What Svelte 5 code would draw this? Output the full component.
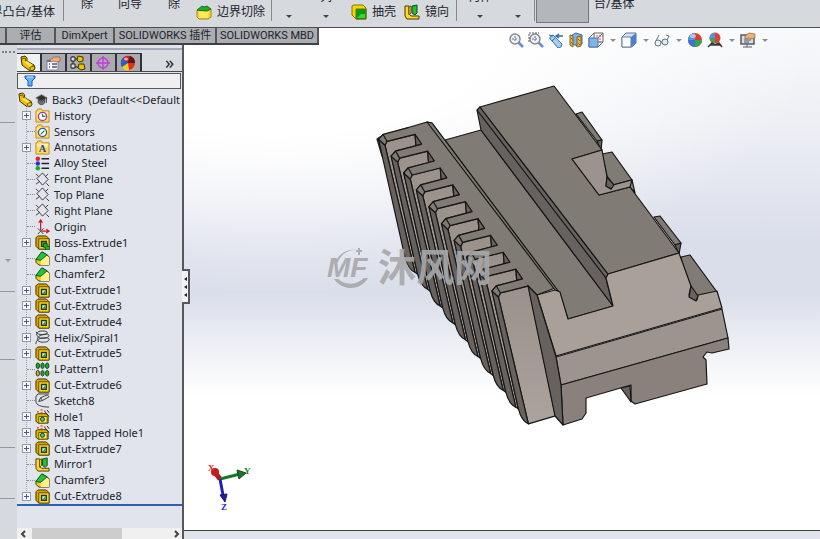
<script>
    let filter = $state("");
    let activeTab = $state(0);
    let selected = $state("");

    const tabs = ["评估", "DimXpert", "SOLIDWORKS 插件", "SOLIDWORKS MBD"];
    const panels = ["part", "props", "config", "target", "ball"];
    const panelNames = ["FeatureManager", "PropertyManager", "ConfigurationManager", "DimXpertManager", "DisplayManager"];

    const tree = [
        { name: "History", icon: "history", open: true },
        { name: "Sensors", icon: "sensor" },
        { name: "Annotations", icon: "notes", open: true },
        { name: "Alloy Steel", icon: "material" },
        { name: "Front Plane", icon: "plane" },
        { name: "Top Plane", icon: "plane" },
        { name: "Right Plane", icon: "plane" },
        { name: "Origin", icon: "origin" },
        { name: "Boss-Extrude1", icon: "boss", open: true },
        { name: "Chamfer1", icon: "chamfer" },
        { name: "Chamfer2", icon: "chamfer" },
        { name: "Cut-Extrude1", icon: "cut", open: true },
        { name: "Cut-Extrude3", icon: "cut", open: true },
        { name: "Cut-Extrude4", icon: "cut", open: true },
        { name: "Helix/Spiral1", icon: "helix", open: true },
        { name: "Cut-Extrude5", icon: "cut", open: true },
        { name: "LPattern1", icon: "pattern" },
        { name: "Cut-Extrude6", icon: "cut", open: true },
        { name: "Sketch8", icon: "sketch" },
        { name: "Hole1", icon: "hole", open: true },
        { name: "M8 Tapped Hole1", icon: "hole", open: true },
        { name: "Cut-Extrude7", icon: "cut", open: true },
        { name: "Mirror1", icon: "mirror" },
        { name: "Chamfer3", icon: "chamfer" },
        { name: "Cut-Extrude8", icon: "cut", open: true }
    ];

    const views = [
        { icon: "zoomfit", label: "Zoom to Fit" },
        { icon: "zoomarea", label: "Zoom to Area" },
        { icon: "previous", label: "Previous View" },
        { icon: "section", label: "Section View" },
        { icon: "orient", label: "View Orientation", menu: true },
        { icon: "display", label: "Display Style", menu: true },
        { icon: "glasses", label: "Hide/Show Items", menu: true },
        { icon: "ball", label: "Edit Appearance" },
        { icon: "scene", label: "Apply Scene", menu: true },
        { icon: "monitor", label: "View Settings", menu: true }
    ];

    // the ten ribs step down the rail by the same amount
    const ribs = Array.from({ length: 10 }, (_, i) => ({ x: 415 + i * 12.6, y: 134.3 + i * 16.85, last: i === 9 }));
</script>

{#snippet icon(kind)}
    <svg class="icon" viewBox="0 0 16 16" aria-hidden="true">
        {#if kind === "part"}
            <path d="M1 2l4-1 2 2v3l7 4 1 3-1 2-4 1-8-6z" fill="#f2c200" stroke="#3a2c00" />
            <path d="M2 4l3-1 1 4 7 4M10 15v-3l4-1" fill="none" stroke="#6b5000" />
            <path d="M7 6l6 4-3 2-6-5z" fill="#ffe04a" />
        {:else if kind === "props"}
            <path d="M2 5h11v10H2z" fill="#f5f7fc" stroke="#7d8498" />
            <path d="M2 5h4v2H2z" fill="#5876bc" />
            <path d="M4 9h1M4 12h1M7 9h5M7 12h5" stroke="#557" stroke-width="1.5" />
            <path d="M5 5l4-3 6 0v4l-4 1-2-1-3 1z" fill="#edb27c" stroke="#915b30" stroke-width=".7" />
        {:else if kind === "config"}
            <path d="M3 1v13M3 4h5M3 12h6" fill="none" stroke="#222" />
            <path d="M1 2h4v4H1zM1 9h4v4H1z" fill="#ddd" stroke="#222" />
            <path d="M8 1l5 1v4l-4 1-2-2zM9 9l5 0 1 5-4 1-3-2z" fill="#eac400" stroke="#403400" />
        {:else if kind === "target"}
            <circle cx="8" cy="8" r="5" fill="none" stroke="#c43ddb" stroke-width="1.4" />
            <path d="M8 1v14M1 8h14" stroke="#c43ddb" stroke-width="1.4" />
        {:else if kind === "globe"}
            <circle cx="8" cy="8" r="7" fill="#2a2a2a" />
            <path d="M8 8L3 3a7 7 0 0 1 7-2z" fill="#d92424" />
            <path d="M8 8l2-7a7 7 0 0 1 5 7z" fill="#5b1620" />
            <path d="M8 8L3 3a7 7 0 0 0-1 9z" fill="#2860c8" />
            <path d="M8 8l-6 4a7 7 0 0 0 13-4z" fill="#f3cf20" />
            <path d="M8 8l1 7a7 7 0 0 0 6-7z" fill="#e02c22" />
            <ellipse cx="6" cy="4" rx="2" ry="1.500" fill="#fff" opacity=".6" />
        {:else if kind === "ball"}
            <circle cx="8" cy="8" r="7" fill="#e33b2d" />
            <path d="M8 8V1A7 7 0 0 0 1 8z" fill="#3aa845" />
            <path d="M1 8a7 7 0 0 0 7 7V8z" fill="#3975d6" />
            <path d="M8 15a7 7 0 0 0 7-7H8z" fill="#35a84c" />
            <path d="M1 8a7 7 0 0 1 7-7v7z" fill="#5d8fe0" />
            <ellipse cx="6" cy="4" rx="3" ry="2" fill="#fff" opacity=".5" />
        {:else if kind === "hat"}
            <path d="M1 6l7-4 7 4-7 4z" fill="#333" stroke="#777" />
            <path d="M4 8v4c2 3 6 3 8 0V8l-4 3z" fill="#777" stroke="#333" />
            <path d="M14 6v6" stroke="#222" />
        {:else if kind === "history" || kind === "sensor" || kind === "notes"}
            <path d="M1 3h1l1-2h4l1 2h7v12H1z" fill="#ffd95e" stroke="#c08a16" />
            <path d="M2 4h12v3H2z" fill="#ffedaa" />
            {#if kind === "notes"}
                <text x="8" y="13" class="letter">A</text>
            {:else}
                <circle cx="8" cy="9" r="4.3" fill="#fff" stroke={kind === "history" ? "#9b3dab" : "#355d97"} stroke-width="1.4" />
                <path d={kind === "history" ? "M8 6v3h3" : "M6 11l4-4M8 9h1"} fill="none" stroke="#25805a" stroke-width="1.3" />
            {/if}
        {:else if kind === "material"}
            <circle cx="3" cy="3" r="2.4" fill="#e12323" />
            <circle cx="3" cy="8" r="2.4" fill="#2434d8" />
            <circle cx="3" cy="13" r="2.4" fill="#20a72b" />
            <path d="M7 3h8M7 8h8M7 13h8" stroke="#222" stroke-width="1.5" />
        {:else if kind === "plane"}
            <path d="M8 1l6 7-6 6-6-7zM1 2l3 3M12 12l3 3M1 13l4-3M11 5l3-3" fill="none" stroke="#353535" />
        {:else if kind === "origin"}
            <path d="M3 10l6 6M9 10l-6 6" stroke="#343434" />
            <path d="M6 12V2M4 4l2-3 2 3M7 13h7M12 11l3 2-3 2" fill="none" stroke="#ca1924" stroke-width="1.3" />
        {:else if kind === "boss" || kind === "cut"}
            <path d="M1 3l2-2h9l3 3v11H4l-3-3z" fill="#dca500" stroke="#3c2e00" />
            <path d="M4 4h11v11H4z" fill="#ffd21f" stroke="#604800" />
            <path d="M7 7h5v5H7z" fill={kind === "cut" ? "#e3ffe4" : "#58c75c"} stroke="#153b20" stroke-width="1.5" />
            {#if kind === "boss"}
                <path d="M9 9h4v3h3v4h-5v-3H9z" fill="#24ae37" stroke="#0a4f18" />
            {:else}
                <path d="M8 11l3-3v3z" fill="#079e31" />
            {/if}
        {:else if kind === "chamfer"}
            <path d="M1 9l7-8 7 5v9H4l-3-3z" fill="#f4c81a" stroke="#3d3000" />
            <path d="M6 9l6-5 3 3v8H6z" fill="#fff08b" />
            <path d="M1 9l6-8 6 3-7 6z" fill="#28c041" stroke="#0a5b20" />
        {:else if kind === "helix"}
            <path d="M1 2c2 2 3 3 7 3 7 0 7-4 0-4S1 5 3 7c2 3 12 2 12-1 0-2-4-2-7-1-5 1-7 5-4 7 4 2 11 1 11-2 0-2-5-2-9-1s-5 4-5 6" fill="none" stroke="#333" />
        {:else if kind === "pattern"}
            {#each [3, 8, 13] as x}
                <ellipse cx={x} cy="4" rx="1.8" ry="3" fill="#1ca637" stroke="#153c1c" />
                <ellipse cx={x} cy="12" rx="1.8" ry="3" fill={x === 3 ? "#ef9a22" : "#1ca637"} stroke="#263b1c" />
            {/each}
        {:else if kind === "sketch"}
            <path d="M15 1H3L1 4v5c0 4 6 6 14 6M4 9l2-4 7-3 2 2-7 4zM6 5l2 3" fill="none" stroke="#333" />
        {:else if kind === "hole"}
            <path d="M1 6l2-1h9l2 2v8H3l-2-2z" fill="#ddb400" stroke="#3f3200" />
            <path d="M4 8h9v7H4z" fill="#ffe75b" stroke="#655000" />
            <circle cx="8" cy="11" r="2.2" fill="#52bd68" stroke="#193f24" />
            <path d="M2 3h2M6 1h2M6 4h2M10 2h1" stroke="#ed5822" stroke-width="1.5" />
            <path d="M10 2l5 6M13 1l2 3" stroke="#222" />
        {:else if kind === "mirror"}
            <path d="M1 2h4v8l2 2h8v3H3l-2-3z" fill="#ffd72c" stroke="#4b3900" />
            <path d="M8 2l5-1v8l-2 2-3-2z" fill="#2abb35" stroke="#064e14" />
            <path d="M5 3l2-1v7l-2 2z" fill="#ffe050" stroke="#654c00" />
        {:else if kind === "boundary"}
            <path d="M1 6h11l3-1v8l-3 2H3l-2-2z" fill="#ffd62e" stroke="#a98412" />
            <path d="M1 6l5-4 2 1 3-1 4 3-4 2z" fill="#20a935" stroke="#0b7a1e" />
            <path d="M3 8h9v6H3z" fill="#ffe75e" />
        {:else if kind === "shell"}
            <path d="M1 2l2-1h9l3 3v11H5l-4-4z" fill="#f1d800" stroke="#8a7200" />
            <path d="M5 5h10v10H5z" fill="#0c9a1c" stroke="#6b6b00" />
            <path d="M6 14l4-4h4v4z" fill="#23df38" />
        {:else if kind === "zoomfit" || kind === "zoomarea"}
            <path d="M10 10l5 5" stroke="#6a8fd0" stroke-width="2.6" />
            <circle cx="7" cy="7" r="5" fill="#edf2f8" stroke="#858a94" stroke-width="1.5" />
            <path d="M4 7h6M7 4v6" stroke="#62738e" stroke-dasharray="2 1" />
            {#if kind === "zoomarea"}
                <path d="M1 10V1h10" fill="none" stroke="#565b66" stroke-dasharray="2 1" />
            {/if}
        {:else if kind === "previous"}
            <path d="M2 5l3-2 9 9-1 3-3 1-5-6-3-3z" fill="#a4cdf2" stroke="#4177a6" />
            <path d="M4 9l3-3M1 3l4 1" stroke="#3467ae" />
            <path d="M15 4H9M11 2L8 4l3 2" fill="none" stroke="#3467ae" stroke-width="1.4" />
        {:else if kind === "section"}
            <path d="M4 3l4-2 6 2v9l-4 2-6-2z" fill="#80afe8" stroke="#416da6" />
            <path d="M2 3l3 1v11l-3-2zM9 5l4-1v10l-4 1z" fill="#e9bd3d" stroke="#796026" />
            <path d="M3 6l2 2M3 10l2 2M10 7l2 2M10 11l2 2" stroke="#8a6826" />
        {:else if kind === "orient"}
            <path d="M1 6l5-5h9v9l-5 5H1z" fill="#fafafa" stroke="#666" />
            <path d="M1 6h9v9H1z" fill="#7fb3e9" stroke="#4678b0" />
            <path d="M6 1v5M10 6l5-5M10 10h5" stroke="#666" />
            <path d="M12 3v8M8 4h7" stroke="#d85454" stroke-dasharray="2 1" />
        {:else if kind === "display"}
            <path d="M1 5l4-4h10v10l-4 4H1z" fill="#d5e3f6" stroke="#62769e" />
            <path d="M10 5l5-4v10l-5 4z" fill="#477fd1" />
            <path d="M1 5h9v10H1z" fill="#fafcff" stroke="#6c7d9b" />
        {:else if kind === "glasses"}
            <circle cx="4" cy="11" r="3" fill="#edf2f7" stroke="#68717d" />
            <circle cx="11" cy="10" r="3" fill="#dcecf5" stroke="#68717d" />
            <path d="M7 10h1M2 9l3-6M13 8l2-4-3-1" fill="none" stroke="#68717d" />
        {:else if kind === "scene"}
            <circle cx="8" cy="6" r="5.5" fill="#e14036" />
            <path d="M8 6V.5A5.5 5.5 0 0 0 2.500 6z" fill="#5d8fe0" />
            <path d="M2.500 6A5.5 5.5 0 0 0 8 11.500V6z" fill="#40a558" />
            <path d="M1 15l4-4 3 2 4-2 3 4M3 13h10" fill="none" stroke="#383838" stroke-width="1.5" />
        {:else if kind === "monitor"}
            <path d="M1 3h13v9H1z" fill="#d9dde6" stroke="#555963" stroke-width="1.5" />
            <path d="M7 12v3M3 15h9M4 8h7M4 10h5" stroke="#555963" />
            <path d="M5 4l4-3 6 1v4l-4 1-2-1-4 1z" fill="#edb27c" stroke="#915b30" stroke-width=".7" />
        {/if}
    </svg>
{/snippet}

<div class="app">
    <header class="ribbon">
        <div class="group first"><button class="row">边界凸台/基体</button></div>
        <div class="group holes">
            <button class="high">除</button>
            <button class="high">向导</button>
            <button class="high">除</button>
            <button class="row">{@render icon("boundary")}边界切除</button>
        </div>
        <div class="group patterns">
            <button class="drop" aria-label="Fillet menu"><i></i></button>
            <button class="drop wide"><span>列</span><i></i></button>
            <button class="row">{@render icon("shell")}抽壳</button>
            <button class="row">{@render icon("mirror")}镜向</button>
        </div>
        <div class="group geometry">
            <button class="drop"><span>何体</span><i></i></button>
            <button class="drop" aria-label="Curves menu"><i></i></button>
        </div>
        <button class="pressed" aria-label="Instant3D"></button>
        <button class="high last">台/基体</button>
    </header>

    <div class="work">
        <nav class="tabs">
            <span class="stub"></span>
            {#each tabs as tab}
                <button>{tab}</button>
            {/each}
        </nav>

        <aside class="strip">
            <div class="grip"></div>
            <div class="slot one"></div>
            <div class="slot two"><i></i></div>
            <div class="slot three"></div>
            <div class="slot four"></div>
            <div class="slot five"></div>
        </aside>

        <section class="side">
            <div class="paneltabs">
                {#each panels as panel, index}
                    <button class:active={activeTab === index} aria-label={panelNames[index]} onclick={() => activeTab = index}>
                        {@render icon(panel === "ball" ? "globe" : panel)}
                    </button>
                {/each}
                <button class="more">»</button>
            </div>
            <label class="filter">
                <svg viewBox="0 0 12 12" aria-hidden="true">
                    <path d="M1 1h10v2L8 6v5H4V6L1 3z" fill="#62b3f4" stroke="#1959bd" />
                    <path d="M3 2h6" stroke="#d7f0ff" />
                </svg>
                <input type="text" aria-label="Filter" bind:value={filter} />
            </label>
            <ul class="tree">
                <li class="root">{@render icon("part")}{@render icon("hat")}<span>Back3&nbsp; (Default&lt;&lt;Default</span></li>
                {#each tree as item}
                    <li class:selected={selected === item.name}>
                        {#if item.open}
                            <button class="plus" aria-label="Expand {item.name}"></button>
                        {:else}
                            <span class="dots"></span>
                        {/if}
                        {@render icon(item.icon)}
                        <button class="name" onclick={() => selected = item.name}>{item.name}</button>
                    </li>
                {/each}
            </ul>
            <div class="rollback"></div>
            <div class="scroll">
                <svg viewBox="0 0 6 8" aria-hidden="true"><path d="M5 1L2 4l3 3" /></svg>
                <div class="track"><div class="thumb"></div></div>
                <svg viewBox="0 0 6 8" aria-hidden="true"><path d="M1 1l3 3-3 3" /></svg>
            </div>
            <button class="handle" aria-label="Collapse panel"><i></i><i></i><i></i></button>
        </section>

        <main class="view">
            <div class="viewbar">
                {#each views as view}
                    <button aria-label={view.label}>{@render icon(view.icon)}</button>
                    {#if view.menu}
                        <button class="arrow" aria-label="{view.label} menu"><i></i></button>
                    {/if}
                {/each}
            </div>
            <svg class="canvas" viewBox="184 28 636 502" role="img" aria-label="Back3">
                <defs>
                    <linearGradient id="front" x1="0" y1="0" x2="0" y2="1">
                        <stop offset="0" stop-color="#9a918b" />
                        <stop offset="1" stop-color="#aca39d" />
                    </linearGradient>
                </defs>
                <g class="model">
                    <!-- teeth on the far side -->
                    <path class="top" d="M576 114l6-2 20 28-5 1z" />
                    <path class="dark" d="M597 141l5-1-1 11z" />
                    <path class="top" d="M602 154l10-2 20 28-19 5-6-9z" />
                    <path class="face" d="M613 185l19-5 3 13-5-6-19 3z" />
                    <path class="top" d="M654 217l6-1 21 27-6 2z" />
                    <path class="dark" d="M675 245l6-2-2 11z" />
                    <path class="top" d="M681 257l9-2 27 37-19 5-10-5z" />

                    <!-- channel, rail and main block -->
                    <path class="top" d="M445 140l36-10 132 176-45 13-9-26z" />
                    <path class="top" d="M377 139l6-4 44-13 5 1 123 165-18 7-9-9-146-130z" />
                    <path class="top" d="M427 122l5 1 127 169-4-2z" />
                    <path class="dark" d="M477 110l3-3 128 167-2 4 7 28-132-176z" />
                    <path class="line" d="M477 110l129 168" />
                    <path class="top" d="M480 107l74-21 48 64-30 9 27 36 31-8 49 66-71 21z" />
                    <path class="face" d="M572 159l30-9 5 27-1 9 5 3 2-4 19-5-2 7-31 8z" />
                    <path class="dark" d="M607 177l7 8-3 4-5-3z" />

                    <!-- front -->
                    <path class="light" d="M537 295l18-5 5 2 8 27 45-13-7-28 2-4 71-21 12 33-2 9 8 5 1-5 19-4 5 17-166 48z" />
                    <path class="dark" d="M691 286l7 10-2 5-7-4z" />
                    <path class="mid" d="M556 357l166-48 6 29-167 47z" />
                    <path class="low" d="M561 385l167-47 1 11-17 4-5-1-4 5 3 3 1 24-72 20-4-3v-16l-45 13v15l-4 6-19 6z" />
                    <path class="dark" d="M621 388l9-2 1 16z" />

                    {#each ribs as rib}
                        <g transform="translate({rib.x} {rib.y})">
                            {#if rib.last}
                                <path class="ribface" d="M0 0l-28 7-2 4L0 138l27-8z" />
                            {:else}
                                <path class="ribface" d="M0 0l1 11.500-20.700 5.300-4 5L2.600 140 0 138-30 11l2-4z" />
                                <path class="dark" d="M0 0l6.700 9.800L1 11.500z" />
                            {/if}
                            <path class="dark" d="M-36.500 5L-30 11 0 138q-7-3-10-15z" />
                            <path class="top" d="M-5.700-7L-32 0l-4.500 5 6.500 6 2-4L0 0" />
                            <path class="line" d="M-32 0l4 7" />
                        </g>
                    {/each}
                    <path class="dark" d="M528 286l9 9 19 62 5 28 2 40-8-9z" />
                </g>

                <g class="mark">
                    <path d="M361 251a20 20 0 0 0-26 12l3-1a18 18 0 0 1 23-11zM334 279a20 20 0 0 0 34-1h-4a19 19 0 0 1-26 1zM358 250v-2h2v2h2v2h-2v3h-2v-3h-2v-2z" />
                    <text class="mf" x="327" y="277">MF</text>
                    <text class="cn" x="378" y="281">沐风网</text>
                </g>

                <g class="triad">
                    <path d="M220 479l-7-9" stroke="#b91616" stroke-width="5" />
                    <circle cx="215" cy="472" r="4" fill="#c41d1d" />
                    <path d="M220 479l20-5" stroke="#197725" stroke-width="3" />
                    <path d="M237 470l9 3-7 6z" fill="#16772a" stroke="#124b1d" />
                    <path d="M220 479l3 16" stroke="#2020b5" stroke-width="3" />
                    <path d="M220 495l7-1-2 8z" fill="#2020a8" stroke="#141477" />
                    <text x="208" y="471" fill="#e82020">X</text>
                    <text x="244" y="474" fill="#168b2b">Y</text>
                    <text x="221" y="510" fill="#2020df">Z</text>
                </g>
            </svg>
            <footer></footer>
        </main>
    </div>
</div>

<style>
    :global(body) {
        background: #d6d9de;
    }
    .app {
        min-height: 100vh;
        display: flex;
        flex-direction: column;
        overflow: hidden;
        color: #20242b;
        font: 12px/16px "Noto Sans", "Noto Sans CJK SC", sans-serif;
    }
    button {
        margin: 0;
        padding: 0;
        border: 0;
        background: none;
        color: inherit;
        font: inherit;
        white-space: nowrap;
    }
    i {
        display: block;
        border: 3px solid transparent;
        border-top-color: #444;
        border-bottom: 0;
    }
    .icon {
        width: 16px;
        height: 16px;
        flex: none;
        display: block;
    }
    .letter {
        font: bold 11px "Liberation Serif", serif;
        fill: #1c3fb0;
        text-anchor: middle;
    }

    .ribbon {
        height: 27px;
        display: flex;
        align-items: flex-start;
        overflow: hidden;
        border-bottom: 1px solid #4b4d50;
        background: #d6d9de;
    }
    .group {
        box-sizing: border-box;
        height: 21px;
        display: flex;
        align-items: flex-start;
        border-right: 1px solid #85888d;
    }
    .row {
        display: flex;
        gap: 5px;
        padding-top: 4px;
    }
    .high {
        margin-top: -4px;
    }
    .first {
        width: 64px;
        justify-content: flex-end;
        padding-right: 8px;
    }
    .holes {
        width: 208px;
        padding-left: 17px;
        gap: 16px;
    }
    .holes .high {
        width: 21px;
        text-align: left;
    }
    .holes .high:nth-child(2) {
        width: 34px;
    }
    .holes .high:nth-child(3) {
        width: 12px;
    }
    .patterns {
        width: 185px;
        gap: 8px;
        padding-left: 5px;
    }
    .drop {
        width: 24px;
        height: 29px;
        margin-top: -11px;
        display: flex;
        flex-direction: column;
        align-items: center;
        justify-content: space-between;
    }
    .drop i {
        margin-top: auto;
    }
    .wide {
        width: 34px;
    }
    .geometry {
        width: 78px;
        gap: 14px;
        padding-left: 11px;
    }
    .pressed {
        box-sizing: border-box;
        width: 53px;
        height: 23px;
        margin-left: 1px;
        border: 1px solid #74777c;
        border-top: 0;
        background: #b3b6bb;
    }
    .last {
        margin-left: 5px;
    }

    .work {
        position: relative;
        flex: 1;
        display: grid;
        grid-template-columns: 17px 167px 1fr;
    }
    /* the command tabs lie over the top of the graphics area */
    .tabs {
        position: absolute;
        top: 0;
        left: 0;
        z-index: 2;
        display: flex;
        height: 17px;
        box-sizing: border-box;
        border-bottom: 2px solid #3e4043;
        background: #abadb1;
        font: 11px/14px Roboto, "Noto Sans CJK SC", sans-serif;
    }
    .tabs button {
        box-sizing: border-box;
        min-width: 102px;
        border-right: 2px solid #54565a;
    }
    .tabs button:nth-child(2) {
        min-width: 49px;
    }
    .tabs button:nth-child(3) {
        min-width: 59px;
    }
    .stub {
        width: 5px;
        border-right: 2px solid #54565a;
    }

    .strip {
        padding-top: 23px;
        background: #d6d9de;
    }
    .grip {
        height: 3px;
        margin: 0 2px;
        border-top: 2px dotted #7d8087;
    }
    .slot {
        box-sizing: border-box;
        margin-right: 2px;
        border-bottom: 1px solid #94979b;
    }
    .one {
        height: 67px;
    }
    .two {
        height: 169px;
        display: flex;
        flex-direction: column;
        justify-content: flex-end;
        align-items: center;
        padding-bottom: 29px;
    }
    .two i {
        border-top-color: #94979b;
    }
    .three {
        height: 68px;
    }
    .four {
        height: 88px;
    }
    .five {
        height: 51px;
    }

    .side {
        position: relative;
        display: flex;
        flex-direction: column;
        min-width: 0;
        padding-top: 20px;
        border-right: 2px solid #55575c;
        background: #e1e4ea;
    }
    .paneltabs {
        display: flex;
        padding-top: 3px;
        border-top: 2px solid #a4a9ba;
        border-bottom: 1px solid #46484c;
        background: #d8dbe0;
    }
    .paneltabs button {
        box-sizing: border-box;
        width: 25px;
        height: 18px;
        padding: 1px 3px;
        border: 1px solid #303236;
        border-width: 1px 2px 0 0;
        background: #a9abb0;
    }
    .paneltabs .active {
        background: #eff1f5;
    }
    .paneltabs .more {
        margin-left: auto;
        border: 0;
        background: none;
        padding: 0;
        font-size: 18px;
        line-height: 14px;
    }
    .filter {
        display: flex;
        align-items: center;
        height: 14px;
        margin: 1px 1px 3px 0;
        padding-left: 6px;
        border: 1px solid #55575b;
        background: #efefef;
    }
    .filter svg {
        width: 12px;
        height: 12px;
        flex: none;
    }
    .filter input {
        flex: 1;
        min-width: 0;
        height: 12px;
        margin: 0;
        padding: 0 4px;
        border: 0;
        outline: 0;
        background: none;
        font: inherit;
    }
    .tree {
        height: 412px;
        flex: none;
        display: grid;
        grid-auto-rows: 1fr;
        margin: 0;
        padding: 0;
        overflow: hidden;
        list-style: none;
        font-size: 11px;
        background: repeating-linear-gradient(#9da0a6 0 1px, transparent 1px 2px) 9px 14px / 1px 390px no-repeat;
    }
    li {
        display: flex;
        align-items: center;
        min-height: 0;
        padding-left: 5px;
        white-space: nowrap;
    }
    li .icon {
        width: 15px;
        height: 15px;
    }
    .root {
        padding-left: 1px;
        gap: 2px;
    }
    .root .icon + .icon {
        width: 13px;
    }
    .root span {
        margin-left: 2px;
    }
    .plus {
        box-sizing: border-box;
        width: 9px;
        height: 9px;
        margin-right: 4px;
        border: 1px solid #96999f;
        background:
            linear-gradient(#3f5aa0, #3f5aa0) center / 5px 1px no-repeat,
            linear-gradient(#3f5aa0, #3f5aa0) center / 1px 5px no-repeat,
            #f7f8fa;
    }
    .dots {
        width: 8px;
        margin: 0 0 0 5px;
        border-top: 1px dotted #888b91;
    }
    .name {
        margin-left: 4px;
    }
    .selected .name {
        background: #bcd3f0;
    }
    .rollback {
        height: 2px;
        background: #2b62b3;
    }
    .scroll {
        display: flex;
        align-items: center;
        gap: 6px;
        height: 11px;
        margin-top: auto;
        padding: 0 2px 0 3px;
        background: #f0f0f0;
    }
    .scroll svg {
        width: 6px;
        height: 8px;
        flex: none;
        fill: none;
        stroke: #3f4145;
        stroke-width: 2;
    }
    .track {
        flex: 1;
    }
    .thumb {
        width: 66%;
        height: 11px;
        background: #cdcdcd;
    }
    /* grab handle sticks out over the graphics area */
    .handle {
        position: absolute;
        top: 241px;
        right: -8px;
        z-index: 1;
        box-sizing: border-box;
        width: 8px;
        height: 35px;
        display: flex;
        flex-direction: column;
        align-items: center;
        justify-content: center;
        gap: 4px;
        border: 2px solid #55575c;
        border-left: 0;
        background: #f0f2f6;
    }
    .handle i {
        border: 2px solid transparent;
        border-right: 3px solid #222;
        border-left: 0;
    }

    .view {
        display: flex;
        flex-direction: column;
        min-width: 0;
        background:
            radial-gradient(ellipse 85% 52% at 15% 0, #fff 40%, rgba(255, 255, 255, 0) 100%),
            linear-gradient(#f8f9fb 0, #eceef4 20%, #dadeea 42%, #dadeea 52%, #e7eaf1 59%, #fff 72%);
    }
    .viewbar {
        display: flex;
        align-items: center;
        justify-content: flex-end;
        gap: 4px;
        padding: 4px 51px 0 0;
    }
    .viewbar button {
        height: 16px;
    }
    .viewbar .arrow {
        width: 9px;
        padding-left: 2px;
    }
    .arrow i {
        width: 0;
        border-top-color: #8a8d93;
    }
    .canvas {
        flex: 1;
        width: 100%;
        min-height: 0;
        margin-top: -20px;
        pointer-events: none;
    }
    .view footer {
        height: 8px;
        border-top: 1px solid #3e4043;
        background: #e1e4ea;
    }
    .model path {
        stroke: #171615;
        stroke-width: 1.2;
        stroke-linejoin: round;
    }
    .model .top {
        fill: #807b74;
    }
    .model .dark {
        fill: #67625f;
    }
    .model .face {
        fill: #9c938e;
    }
    .model .light {
        fill: #a9a09a;
    }
    .model .mid {
        fill: #9c948e;
    }
    .model .low {
        fill: #8a817c;
    }
    .model .ribface {
        fill: url(#front);
    }
    .model .line {
        fill: none;
    }
    .mark {
        fill: #a6a8aa;
        opacity: 0.9;
    }
    .mf {
        font: italic bold 28px "Liberation Sans", sans-serif;
    }
    .cn {
        font: bold 38px "Noto Sans CJK SC", sans-serif;
    }
    .triad text {
        font: bold 9px "Liberation Serif", serif;
    }
</style>
